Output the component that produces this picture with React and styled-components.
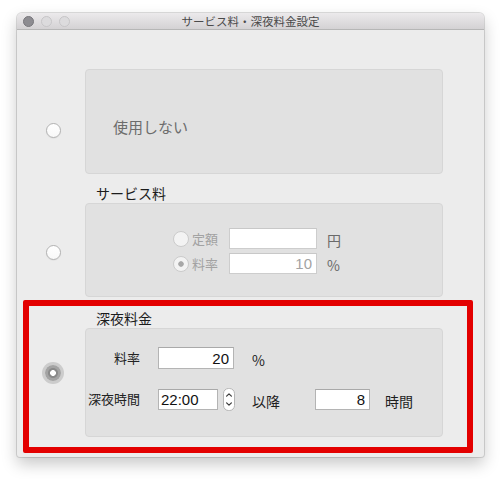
import React from 'react';
import styled, { createGlobalStyle } from 'styled-components';

const Global = createGlobalStyle`
  html, body { margin: 0; padding: 0; background: #ffffff; }
  body { font-family: "Noto Sans CJK JP", "Liberation Sans", sans-serif; }
  *, *::before, *::after { box-sizing: border-box; }
`;

const Stage = styled.div`
  width: 501px;
  height: 479px;
  padding: 13px 0 0 17px;
  overflow: hidden;
`;

const Window = styled.div`
  width: 467px;
  height: 444px;
  background: #ececec;
  border-radius: 5px 5px 3px 3px;
  box-shadow: 0 0 0 1px rgba(0, 0, 0, 0.13), 0 7px 16px rgba(0, 0, 0, 0.22);
  display: flex;
  flex-direction: column;
  overflow: hidden;
`;

const TitleBar = styled.div`
  flex: none;
  height: 17px;
  display: grid;
  grid-template-columns: 1fr auto 1fr;
  align-items: center;
  background: linear-gradient(#eceaec, #d4d2d4);
  border-bottom: 1px solid #b6b6b6;
`;

const Lights = styled.div`
  display: flex;
  gap: 7px;
  padding-left: 6px;
`;

const Light = styled.span`
  width: 11px;
  height: 11px;
  border-radius: 50%;
  background: ${p => (p.$active ? '#8d8c91' : '#dcdbdd')};
  border: 1px solid ${p => (p.$active ? '#77767b' : '#c6c5c7')};
`;

const Title = styled.div`
  font-size: 11.5px;
  line-height: 16px;
  color: #4a4a4a;
`;

const Content = styled.div`
  flex: 1;
  display: flex;
  flex-direction: column;
`;

const Section = styled.section`
  margin: ${p => p.$top}px 11px 0 6px;
  border-style: solid;
  border-color: ${p => (p.$highlight ? '#e30000' : 'transparent')};
  border-width: ${p => (p.$highlight ? '6px' : '0 6px')};
  border-radius: 2px;
  padding: ${p => (p.$highlight ? '3px 0 10px' : '0')};
  display: grid;
  grid-template-columns: 48px 358px;
  grid-template-areas:
    ". title"
    "radio panel";
  column-gap: 8px;
`;

const SectionTitle = styled.div`
  grid-area: title;
  font-size: 14px;
  line-height: 19px;
  color: #1c1c1c;
  padding-left: 11px;
`;

const RadioSlot = styled.div`
  grid-area: radio;
  justify-self: center;
  align-self: start;
  margin-top: ${p => p.$offset}px;
`;

const Radio = styled.span`
  display: block;
  width: 15px;
  height: 15px;
  border-radius: 50%;
  background: linear-gradient(#ffffff, #f8f8f8);
  border: 1px solid #b2b2b2;
  box-shadow: 0 0.5px 1px rgba(0, 0, 0, 0.08);
`;

const RadioOn = styled.span`
  display: block;
  width: 16px;
  height: 16px;
  border-radius: 50%;
  background: radial-gradient(circle, #ffffff 0 2.6px, #8a8a8a 3.2px 4.6px, #a3a3a3 5.4px);
  box-shadow: 0 0 0 3px #cccccc;
`;

const Panel = styled.div`
  grid-area: panel;
  height: ${p => p.$height}px;
  background: #e1e1e1;
  border: 1px solid #d6d6d6;
  border-radius: 4px;
`;

const NoUseText = styled.div`
  padding: 46px 0 0 27px;
  font-size: 15px;
  line-height: 22px;
  color: #6c6c6c;
`;

const ServiceGrid = styled.div`
  display: grid;
  grid-template-columns: 56px 88px auto;
  grid-auto-rows: 21px;
  row-gap: 4px;
  padding: 24px 0 0 87px;
  align-items: center;
`;

const Option = styled.label`
  display: flex;
  align-items: center;
  gap: 3px;
  font-size: 13px;
  line-height: 16px;
  color: #a2a2a2;
`;

const SmallRadio = styled.span`
  flex: none;
  width: 16px;
  height: 16px;
  border-radius: 50%;
  border: 1px solid #cbcbcb;
  background: ${p =>
    p.$checked
      ? 'radial-gradient(circle, #a8a8a8 0 2.4px, #f3f3f3 3.1px)'
      : '#f3f3f3'};
`;

const Field = styled.input`
  display: block;
  width: ${p => p.$w}px;
  height: ${p => p.$h || 21}px;
  margin: 0;
  background: #ffffff;
  border: 1px solid ${p => (p.$muted ? '#cdcdcd' : '#b4b4b4')};
  border-top-color: ${p => (p.$muted ? '#c8c8c8' : '#a9a9a9')};
  border-radius: 0;
  outline: none;
  font-family: "Liberation Sans", "Noto Sans CJK JP", sans-serif;
  font-size: 15px;
  color: ${p => (p.$muted ? '#a3a3a3' : '#111111')};
  text-align: ${p => (p.$left ? 'left' : 'right')};
  padding: 0 ${p => (p.$left ? 3 : 4)}px 0 ${p => (p.$left ? 2 : 4)}px;
`;

const Unit = styled.span`
  margin-left: ${p => p.$shift || 0}px;
  padding-top: 3px;
  font-size: 14px;
  line-height: 18px;
  color: ${p => (p.$muted ? '#6a6a6a' : '#1e1e1e')};
`;

const NightGrid = styled.div`
  display: grid;
  grid-template-columns: 54px 76px 45px 55px auto;
  grid-template-rows: 22px 22px;
  column-gap: 18px;
  row-gap: 19px;
  padding-top: 18px;
  align-items: center;
`;

const FieldLabel = styled.span`
  justify-self: end;
  font-size: 13px;
  line-height: 18px;
  color: #222222;
`;

const TimeBox = styled.div`
  display: flex;
  align-items: center;
  gap: 5px;
`;

const Stepper = styled.svg`
  display: block;
  flex: none;
`;

const Spacer = styled.span``;

export default function App() {
  return (
    <>
      <Global />
      <Stage>
        <Window>
          <TitleBar>
            <Lights>
              <Light $active />
              <Light />
              <Light />
            </Lights>
            <Title>サービス料・深夜料金設定</Title>
            <Spacer />
          </TitleBar>
          <Content>
            <Section $top={39}>
              <RadioSlot $offset={54}>
                <Radio />
              </RadioSlot>
              <Panel $height={105}>
                <NoUseText>使用しない</NoUseText>
              </Panel>
            </Section>

            <Section $top={10}>
              <SectionTitle>サービス料</SectionTitle>
              <RadioSlot $offset={42}>
                <Radio />
              </RadioSlot>
              <Panel $height={94}>
                <ServiceGrid>
                  <Option>
                    <SmallRadio />
                    定額
                  </Option>
                  <Field $w={88} $muted readOnly defaultValue="" />
                  <Unit $shift={10} $muted>円</Unit>
                  <Option>
                    <SmallRadio $checked />
                    料率
                  </Option>
                  <Field $w={88} $muted readOnly defaultValue="10" />
                  <Unit $shift={10} $muted>%</Unit>
                </ServiceGrid>
              </Panel>
            </Section>

            <Section $top={3} $highlight>
              <SectionTitle>深夜料金</SectionTitle>
              <RadioSlot $offset={37}>
                <RadioOn />
              </RadioSlot>
              <Panel $height={109}>
                <NightGrid>
                  <FieldLabel>料率</FieldLabel>
                  <Field $w={76} $h={22} readOnly defaultValue="20" />
                  <Unit>%</Unit>
                  <Spacer />
                  <Spacer />

                  <FieldLabel>深夜時間</FieldLabel>
                  <TimeBox>
                    <Field $w={60} $left readOnly defaultValue="22:00" />
                    <Stepper width="12" height="23" viewBox="0 0 12 23">
                      <rect x="0.5" y="0.5" width="11" height="22" rx="5" fill="#ffffff" stroke="#b5b5b5" />
                      <path d="M3.6 8.2 L6 5.8 L8.4 8.2" fill="none" stroke="#3a3a3a" strokeWidth="1.2" strokeLinecap="round" strokeLinejoin="round" />
                      <path d="M3.6 14.8 L6 17.2 L8.4 14.8" fill="none" stroke="#3a3a3a" strokeWidth="1.2" strokeLinecap="round" strokeLinejoin="round" />
                    </Stepper>
                  </TimeBox>
                  <Unit>以降</Unit>
                  <Field $w={55} readOnly defaultValue="8" />
                  <Unit $shift={-3}>時間</Unit>
                </NightGrid>
              </Panel>
            </Section>
          </Content>
        </Window>
      </Stage>
    </>
  );
}
